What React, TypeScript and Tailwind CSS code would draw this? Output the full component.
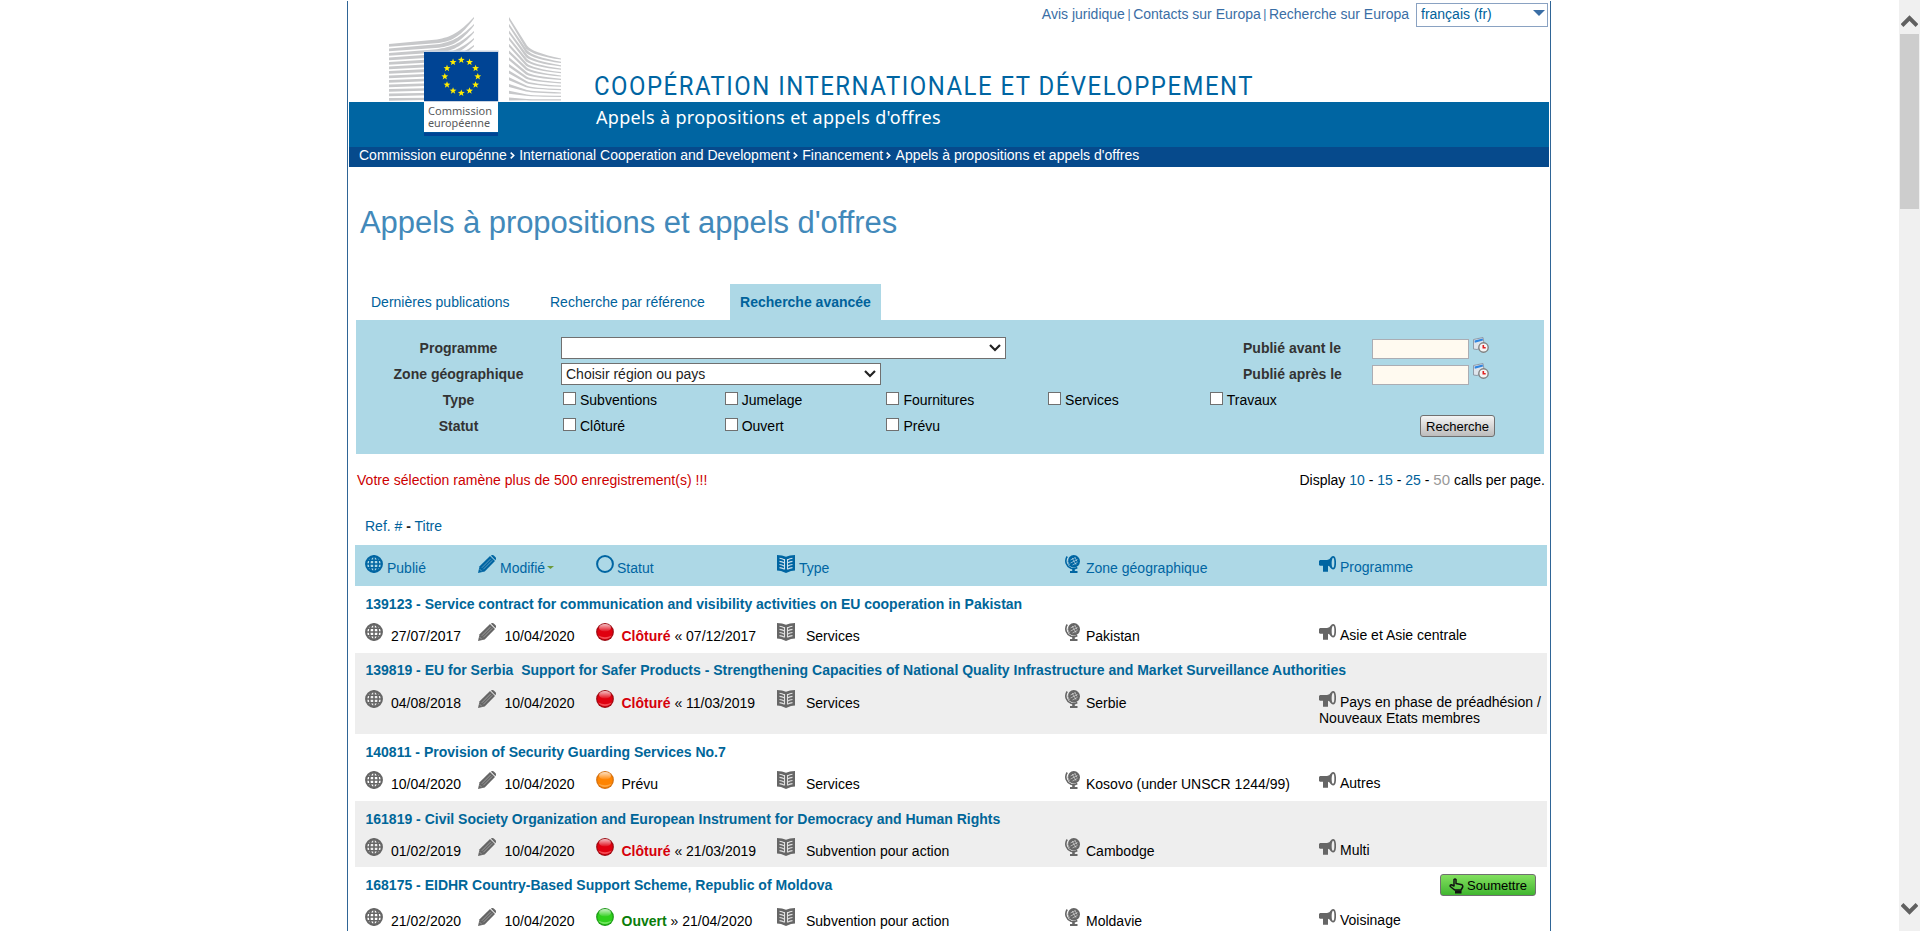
import type { ReactNode } from "react";

type Status = "closed" | "forecast" | "open";

interface Call {
  title: string;
  published: string;
  modified: string;
  status: Status;
  date?: string;
  type: string;
  zone: string;
  programme: string;
  row: string;
  details: string;
  titlePad: string;
  submit?: boolean;
}

const calls: Call[] = [
  { title: "139123 - Service contract for communication and visibility activities on EU cooperation in Pakistan", published: "27/07/2017", modified: "10/04/2020", status: "closed", date: "« 07/12/2017", type: "Services", zone: "Pakistan", programme: "Asie et Asie centrale", row: "h-[67px] bg-white", titlePad: "pt-[10px]", details: "mt-[11px]" },
  { title: "139819 - EU for Serbia\u00a0 Support for Safer Products - Strengthening Capacities of National Quality Infrastructure and Market Surveillance Authorities", published: "04/08/2018", modified: "10/04/2020", status: "closed", date: "« 11/03/2019", type: "Services", zone: "Serbie", programme: "Pays en phase de préadhésion / Nouveaux Etats membres", row: "h-[81px] bg-[#eeeeee]", titlePad: "pt-[9px]", details: "mt-[12px]" },
  { title: "140811 - Provision of Security Guarding Services No.7", published: "10/04/2020", modified: "10/04/2020", status: "forecast", type: "Services", zone: "Kosovo (under UNSCR 1244/99)", programme: "Autres", row: "h-[67px] bg-white", titlePad: "pt-[10px]", details: "mt-[11px]" },
  { title: "161819 - Civil Society Organization and European Instrument for Democracy and Human Rights", published: "01/02/2019", modified: "10/04/2020", status: "closed", date: "« 21/03/2019", type: "Subvention pour action", zone: "Cambodge", programme: "Multi", row: "h-[66px] bg-[#eeeeee]", titlePad: "pt-[10px]", details: "mt-[11px]" },
  { title: "168175 - EIDHR Country-Based Support Scheme, Republic of Moldova", published: "21/02/2020", modified: "10/04/2020", status: "open", date: "» 21/04/2020", type: "Subvention pour action", zone: "Moldavie", programme: "Voisinage", row: "h-[72px] bg-white", titlePad: "pt-[10px]", details: "mt-[15px]", submit: true },
];

const statusLook: Record<Status, { label: string; text: string; dark: string; mid: string; light: string }> = {
  closed: { label: "Clôturé", text: "font-bold text-[#d6000b]", dark: "#8c0a10", mid: "#e0000f", light: "#ff6b70" },
  forecast: { label: "Prévu", text: "", dark: "#c86a10", mid: "#ff8400", light: "#ffb45a" },
  open: { label: "Ouvert", text: "font-bold text-[#0a7d0a]", dark: "#128a10", mid: "#2fd01c", light: "#8cf07c" },
};

const columns = "grid grid-cols-[113px_118px_181px_288px_254px_218px] pl-[10px]";

function GlobeIcon() {
  return (
    <svg className="block h-[18px] w-[18px] shrink-0" viewBox="0 0 18 18" fill="none" stroke="currentColor" strokeWidth="1.6">
      <circle cx="9" cy="9" r="7.900" strokeWidth="2.100" />
      <ellipse cx="9" cy="9" rx="4.300" ry="8" />
      <path d="M9 1v16M1 9h16M2.400 5.200h13.200M2.400 12.800h13.200" />
    </svg>
  );
}

function PencilIcon() {
  return (
    <svg className="block h-[18px] w-[18px] shrink-0" viewBox="0 0 18 18">
      <path d="M0 18l1.600-6.700L12 1 17 6 6.700 16.400z" fill="currentColor" />
      <path d="M12.800.6Q14.300-.5 15.800.4L17.600 2.200Q18.500 3.700 17.400 5.200z" fill="currentColor" />
      <path d="M3.800 12.800L12.800 3.800M5.300 14.300l9-9M1.600 14.100l2.300 2.300" stroke="#fff" strokeOpacity=".5" strokeWidth=".7" />
    </svg>
  );
}

function BookIcon() {
  return (
    <svg className="block h-[18px] w-[18px] shrink-0" viewBox="0 0 18 18" fill="none">
      <path d="M0 0Q5.500.2 9 1.800 12.500.2 18 0V15.500L14 16 9 18 4 16 0 15.500z" fill="currentColor" />
      <path d="M2.500 3.300q2.600.3 4.600 1.400M2.500 6.400q2.600.3 4.600 1.400M2.500 9.500q2.600.3 4.600 1.400M2.500 12.600q2.600.3 4.600 1.400M15.500 3.300q-2.600.3-4.600 1.400M15.500 6.400q-2.600.3-4.600 1.400M15.500 9.500q-2.600.3-4.600 1.400M15.500 12.600q-2.600.3-4.600 1.400M7.500 4v10.500M10.500 4v10.500" stroke="#fff" strokeOpacity=".8" strokeWidth="1.100" />
    </svg>
  );
}

function DeskGlobeIcon() {
  return (
    <svg className="block h-[18px] w-[15px] shrink-0" viewBox="0 0 15 18" fill="none" stroke="currentColor">
      <circle cx="8.800" cy="6.300" r="6.200" fill="currentColor" stroke="none" />
      <path d="M2.200 1.500C-.8 6 1.500 11.500 6 13.200Q9.500 14.300 12.300 12.500" strokeWidth="1.600" />
      <path d="M8.500 13.500v3.500" strokeWidth="2.600" />
      <path d="M5 17h7.500" strokeWidth="2" />
      <path d="M3 3Q1.900 7 4.500 10M5.500 5l5-2.500M5.500 8l7-3.500M7.500 10l5-2.600M7.200 3l3.800 6.700M10 2.500l2 4" stroke="#fff" strokeOpacity=".6" strokeWidth=".8" />
    </svg>
  );
}

function MegaphoneIcon() {
  return (
    <svg className="mr-1 inline-block h-4 w-[17px] align-baseline" viewBox="0 0 17 16">
      <path d="M1 4h7q2.500-.2 4-2.600V12.200Q10.600 10 9 9.700V15.700H4V9.700H1L0 9V5z" fill="currentColor" />
      <ellipse cx="14" cy="6.800" rx="2.200" ry="5.900" fill="none" stroke="currentColor" strokeWidth="1.700" />
    </svg>
  );
}

function Ball({ status }: { status: Status }) {
  const c = statusLook[status];
  return (
    <svg className="block h-[18px] w-[18px] shrink-0" viewBox="0 0 18 18">
      <defs>
        <radialGradient id={`ball-${status}`} cx=".5" cy=".5" r=".5">
          <stop offset="0" stopColor={c.mid} />
          <stop offset=".75" stopColor={c.mid} />
          <stop offset="1" stopColor={c.dark} />
        </radialGradient>
        <linearGradient id={`shine-${status}`} x1="0" y1="0" x2="0" y2="1">
          <stop offset="0" stopColor="#fff" stopOpacity=".75" />
          <stop offset="1" stopColor="#fff" stopOpacity=".05" />
        </linearGradient>
      </defs>
      <circle cx="9" cy="9" r="8.900" fill={`url(#ball-${status})`} />
      <path d="M2.200 12.500a7.300 5.500 0 0 0 13.600 0q-6.800 3.400-13.600 0z" fill={c.light} fillOpacity=".7" />
      <ellipse cx="9" cy="4.800" rx="6" ry="3.800" fill={`url(#shine-${status})`} />
    </svg>
  );
}

function CalendarIcon() {
  return (
    <svg className="block h-4 w-4" viewBox="0 0 16 16">
      <path d="M.500 2.500L10 .5 11.500 9 4 12.500 .500 12z" fill="#dfe5ec" stroke="#8a93a0" strokeWidth=".9" />
      <path d="M1.500 3.400L9.700 1.400l.3 2L1.800 5.700z" fill="#2f86e0" />
      <circle cx="10.500" cy="10.500" r="4.700" fill="#f4f4f4" stroke="#808080" strokeWidth="1.400" />
      <path d="M10.300 8v2.700h2.400" stroke="#e02020" strokeWidth="1.600" fill="none" />
    </svg>
  );
}

function starPoints(cx: number, cy: number, r: number) {
  return Array.from({ length: 10 }, (_, i) => {
    const radius = i % 2 === 0 ? r : r * 0.42;
    const a = (Math.PI / 5) * i - Math.PI / 2;
    return `${(cx + radius * Math.cos(a)).toFixed(2)},${(cy + radius * Math.sin(a)).toFixed(2)}`;
  }).join(" ");
}

function CommissionLogo() {
  const lines = Array.from({ length: 13 }, (_, i) => i);
  return (
    <svg className="absolute left-[40px] top-[15px] h-[120px] w-[173px]" viewBox="0 0 173 120">
      <g fill="#c7c8ca">
        {lines.map((i) => {
          const l = 29 + i * 4.500;
          const r = 1 + i * 7;
          const k = 1 - i / 13;
          return <path key={i} d={`M0 ${l - 1} L48 ${l - 4.500 * k - 1} C62 ${l - 7 * k - 1} 70 ${r + 16 * k} 85 ${r} V${r + 1.500} C72 ${r + 18 * k + 1} 64 ${l - 5 * k + 1} 50 ${l - 3 * k + 1} L0 ${l + 1.800}z`} />;
        })}
        {lines.map((i) => {
          const l = 1 + i * 6.700;
          const r = 43 + i * 3.400;
          const d = r - l;
          return <path key={i} d={`M120 ${l} L138 ${l + d * 0.68} Q143 ${l + d * 0.85} 172 ${r - 0.600} V${r + 0.600} Q145 ${l + d * 0.900 + 1} 137 ${l + d * 0.73 + 1} L120 ${l + 3}z`} />;
        })}
      </g>
      <rect x="35" y="34.500" width="74.700" height="51.500" fill="#c9d3e2" />
      <rect x="35" y="36" width="74" height="49" fill="#004494" />
      {Array.from({ length: 12 }, (_, i) => {
        const a = (Math.PI / 6) * i;
        return <polygon key={i} points={starPoints(72.300 + 16.500 * Math.sin(a), 60.500 - 16.500 * Math.cos(a), 3.600)} fill="#ffed00" />;
      })}
      <rect x="35" y="86" width="74" height="30" fill="#fff" />
      <rect x="35" y="116.500" width="74" height="3.500" fill="#004494" />
      <g fill="#58595b" fontFamily="'Noto Sans', sans-serif" fontSize="10.500">
        <text x="39" y="99" textLength="64" lengthAdjust="spacingAndGlyphs">Commission</text>
        <text x="39" y="110.500" textLength="62" lengthAdjust="spacingAndGlyphs">européenne</text>
      </g>
    </svg>
  );
}

function Chevron() {
  return (
    <svg className="block h-[8px] w-[12px]" viewBox="0 0 12 8" fill="none" stroke="#222" strokeWidth="2.200">
      <path d="M1 1l5 5 5-5" />
    </svg>
  );
}

function Check({ label }: { label: string }) {
  return (
    <label className="flex w-[161.700px] shrink-0">
      <span className="mt-[1px] block h-[13px] w-[13px] border border-[#707070] bg-white" />
      <span className="ml-[4px] mt-[1px] leading-4">{label}</span>
    </label>
  );
}

function Cell({ icon, gap, children }: { icon: ReactNode; gap: string; children: ReactNode }) {
  return (
    <div className="flex whitespace-nowrap text-[#666]">
      {icon}
      <span className={`${gap} mt-[5px] leading-4 text-black`}>{children}</span>
    </div>
  );
}

function HeadCell({ icon, gap, children }: { icon: ReactNode; gap: string; children: ReactNode }) {
  return (
    <div className="flex whitespace-nowrap">
      {icon}
      <span className={`${gap} mt-[5px] flex leading-4`}>{children}</span>
    </div>
  );
}

function Header() {
  return (
    <header className="relative ml-[1px] w-[1200px]">
      <div className="flex h-[101px] flex-col justify-between">
        <div className="flex h-[30px] justify-end pr-[1px] pt-[2px] text-[#3a6ea5]">
          <div className="flex pt-[3px] leading-4">
            <span>Avis juridique</span>
            <span className="mx-[2.600px] text-[12px]">|</span>
            <span>Contacts sur Europa</span>
            <span className="mx-[2.500px] text-[12px]">|</span>
            <span>Recherche sur Europa</span>
          </div>
          <div className="ml-[7px] flex h-[24px] w-[132px] justify-between border border-[#8aa2c2] pl-[4px] pr-[2px] pt-[2px] leading-4 text-[#00629b]">
            <span>français (fr)</span>
            <svg className="mt-[4px] h-[6px] w-[12px]" viewBox="0 0 12 6"><path d="M0 0h12L6 6z" fill="#3a6ea5" /></svg>
          </div>
        </div>
        <div className="-mb-[1px] ml-[245px] origin-left scale-x-[0.92] whitespace-nowrap font-[Roboto,sans-serif] text-[26px] leading-[34px] tracking-[1.630px] text-[#0065a2]">COOPÉRATION INTERNATIONALE ET DÉVELOPPEMENT</div>
      </div>
      <div className="h-[45px] bg-[#0065a2] pl-[247px] pt-[2px] font-['Noto_Sans',sans-serif] text-[18px] leading-[26px] tracking-[0.320px] text-white">Appels à propositions et appels d'offres</div>
      <nav className="flex h-[20px] bg-[#064a8c] pl-[10px] leading-4 text-white">
        <span>Commission europénne</span><Sep />
        <span>International Cooperation and Development</span><Sep />
        <span>Financement</span><Sep />
        <span>Appels à propositions et appels d'offres</span>
      </nav>
      <CommissionLogo />
    </header>
  );
}

function Sep() {
  return (
    <svg className="ml-[3px] mr-[4.300px] mt-[5px] h-[7px] w-[5px]" viewBox="0 0 5 7" fill="none" stroke="#fff" strokeWidth="1.600"><path d="M.7.7L3.700 3.500.7 6.300" /></svg>
  );
}

function SearchPanel() {
  return (
    <section className="ml-[8px] flex h-[134px] w-[1188px] bg-[#add8e6] pt-[17px]">
      <div className="flex w-[205px] flex-col gap-[10px] pt-[3px] text-center font-bold leading-4 text-[#333]">
        <span>Programme</span>
        <span>Zone géographique</span>
        <span>Type</span>
        <span>Statut</span>
      </div>
      <div className="flex w-[640px] flex-col">
        <div className="flex h-[22px] w-[445px] items-center justify-end border border-[#707070] bg-white pr-[4px]"><Chevron /></div>
        <div className="mt-[4px] flex h-[22px] w-[320px] items-center justify-between border border-[#707070] bg-white pl-[4px] pr-[4px] leading-4 text-[#222]"><span>Choisir région ou pays</span><Chevron /></div>
        <div className="mt-[6px] flex pl-[2px]">
          <Check label="Subventions" /><Check label="Jumelage" /><Check label="Fournitures" /><Check label="Services" /><Check label="Travaux" />
        </div>
        <div className="mt-[9px] flex pl-[2px]">
          <Check label="Clôturé" /><Check label="Ouvert" /><Check label="Prévu" />
        </div>
      </div>
      <div className="ml-[42px] flex w-[252px] flex-col">
        {["Publié avant le", "Publié après le"].map((label) => (
          <div key={label} className="flex h-[26px]">
            <span className="mt-[3px] w-[129px] font-bold leading-4 text-[#333]">{label}</span>
            <span className="mt-[2px] h-[20px] w-[97px] border border-[#abadb3] bg-[#fffaf0]" />
            <span className="ml-[4px]"><CalendarIcon /></span>
          </div>
        ))}
        <button className="mt-[26px] flex h-[22px] w-[75px] items-center justify-center self-end rounded-[3px] border border-[#707070] bg-linear-to-b from-[#f4f4f4] to-[#bcbcbc] pt-[1px] text-[13px] text-black">Recherche</button>
      </div>
    </section>
  );
}

function Scrollbar() {
  return (
    <div className="flex h-[931px] w-[21px] flex-col items-center bg-[#f0f0f0]">
      <svg className="mt-[14px] h-[14px] w-[17px]" viewBox="0 0 17 14" fill="none" stroke="#606060" strokeWidth="4"><path d="M1 11.500L8.500 4 16 11.500" /></svg>
      <div className="mt-[6px] h-[175px] w-[19px] bg-[#cdcdcd]" />
      <svg className="mb-[15px] mt-auto h-[14px] w-[17px]" viewBox="0 0 17 14" fill="none" stroke="#606060" strokeWidth="4"><path d="M1 2.500L8.500 10 16 2.500" /></svg>
    </div>
  );
}

export default function App() {
  return (
    <div className="flex h-[931px] w-[1920px] justify-between overflow-hidden bg-white font-['Liberation_Sans',Arial,sans-serif] text-[14px] text-black">
      <div className="ml-[347px] mt-[1px] h-[960px] w-[1204px] border-x border-[#2f6596]">
        <Header />
        <h1 className="ml-[12px] mt-[38px] h-[79px] text-[31px] leading-[36px] tracking-[-0.060px] text-[#4289ba]">Appels à propositions et appels d'offres</h1>
        <div className="ml-[8px] flex h-[36px] leading-4 text-[#00629b]">
          <span className="ml-[15px] w-[179px] pt-[10px]">Dernières publications</span>
          <span className="w-[180px] pt-[10px]">Recherche par référence</span>
          <span className="w-[151px] bg-[#add8e6] pt-[10px] text-center font-bold">Recherche avancée</span>
        </div>
        <SearchPanel />
        <div className="ml-[9px] mr-[5px] mt-[18px] flex justify-between leading-4">
          <span className="tracking-[0.030px] text-[#cc0000]">Votre sélection ramène plus de 500 enregistrement(s) !!!</span>
          <span>Display <a className="text-[#00629b]">10</a> - <a className="text-[#00629b]">15</a> - <a className="text-[#00629b]">25</a> - <span className="text-[15px] text-[#999]">50</span> calls per page.</span>
        </div>
        <div className="ml-[17px] mt-[30px] leading-4 text-[#00629b]">Ref. # <b className="text-[#222]">-</b> Titre</div>
        <div className="ml-[7px] w-[1192px] pt-[11px]">
          <div className={`${columns} h-[41px] bg-[#add8e6] pt-[10px] text-[#0065a2]`}>
            <HeadCell gap="ml-[4px]" icon={<GlobeIcon />}>Publié</HeadCell>
            <HeadCell gap="ml-[4px]" icon={<PencilIcon />}>Modifié<svg className="ml-[2px] mt-[6px] h-[3px] w-[7px]" viewBox="0 0 6 3" preserveAspectRatio="none"><path d="M0 0h6L3 3z" fill="#6d9a3c" /></svg></HeadCell>
            <HeadCell gap="ml-[3px]" icon={<svg className="block h-[18px] w-[18px]" viewBox="0 0 18 18"><circle cx="9" cy="9" r="7.900" fill="none" stroke="currentColor" strokeWidth="2" /></svg>}>Statut</HeadCell>
            <HeadCell gap="ml-[4px]" icon={<BookIcon />}>Type</HeadCell>
            <HeadCell gap="ml-[6px]" icon={<DeskGlobeIcon />}>Zone géographique</HeadCell>
            <div className="pt-[1px] leading-4"><MegaphoneIcon />Programme</div>
          </div>
          {calls.map((call) => (
            <article key={call.title} className={call.row}>
              <div className={`${call.titlePad} flex justify-between pl-[10.500px] pr-[11px]`}>
                <h2 className="whitespace-nowrap font-bold leading-4 text-[#006699]">{call.title}</h2>
                {call.submit && (
                  <button className="-mb-[9px] -mt-[3px] flex h-[22px] w-[96px] items-center rounded-[3px] border border-[#707070] bg-linear-to-b from-[#82e05f] to-[#3fb62f] pl-[8px] pt-[1px] text-[13px] text-black">
                    <svg className="mr-[3px] h-[16px] w-[15px]" viewBox="0 0 15 16" fill="none" stroke="#111" strokeWidth="1.500" strokeLinejoin="round">
                      <path d="M5 11.500L1.300 8.500Q.7 6.800 2.500 6.800L5 8V1.500Q6 .3 7 1.500V5.500L13 6.800Q14.200 8 13.500 9.500L12 12H6z" />
                      <path d="M6 14h6.500" strokeWidth="3" />
                    </svg>
                    Soumettre
                  </button>
                )}
              </div>
              <div className={`${columns} ${call.details}`}>
                <Cell gap="ml-[8px]" icon={<GlobeIcon />}>{call.published}</Cell>
                <Cell gap="ml-[8.500px]" icon={<PencilIcon />}>{call.modified}</Cell>
                <Cell gap="ml-[7.500px]" icon={<Ball status={call.status} />}><span className={statusLook[call.status].text}>{statusLook[call.status].label}</span>{call.date && ` ${call.date}`}</Cell>
                <Cell gap="ml-[11px]" icon={<BookIcon />}>{call.type}</Cell>
                <Cell gap="ml-[6px]" icon={<DeskGlobeIcon />}>{call.zone}</Cell>
                <div className="-mr-[8px] pt-[1px] leading-4 text-[#666]"><MegaphoneIcon /><span className="text-black">{call.programme}</span></div>
              </div>
            </article>
          ))}
        </div>
      </div>
      <Scrollbar />
    </div>
  );
}
